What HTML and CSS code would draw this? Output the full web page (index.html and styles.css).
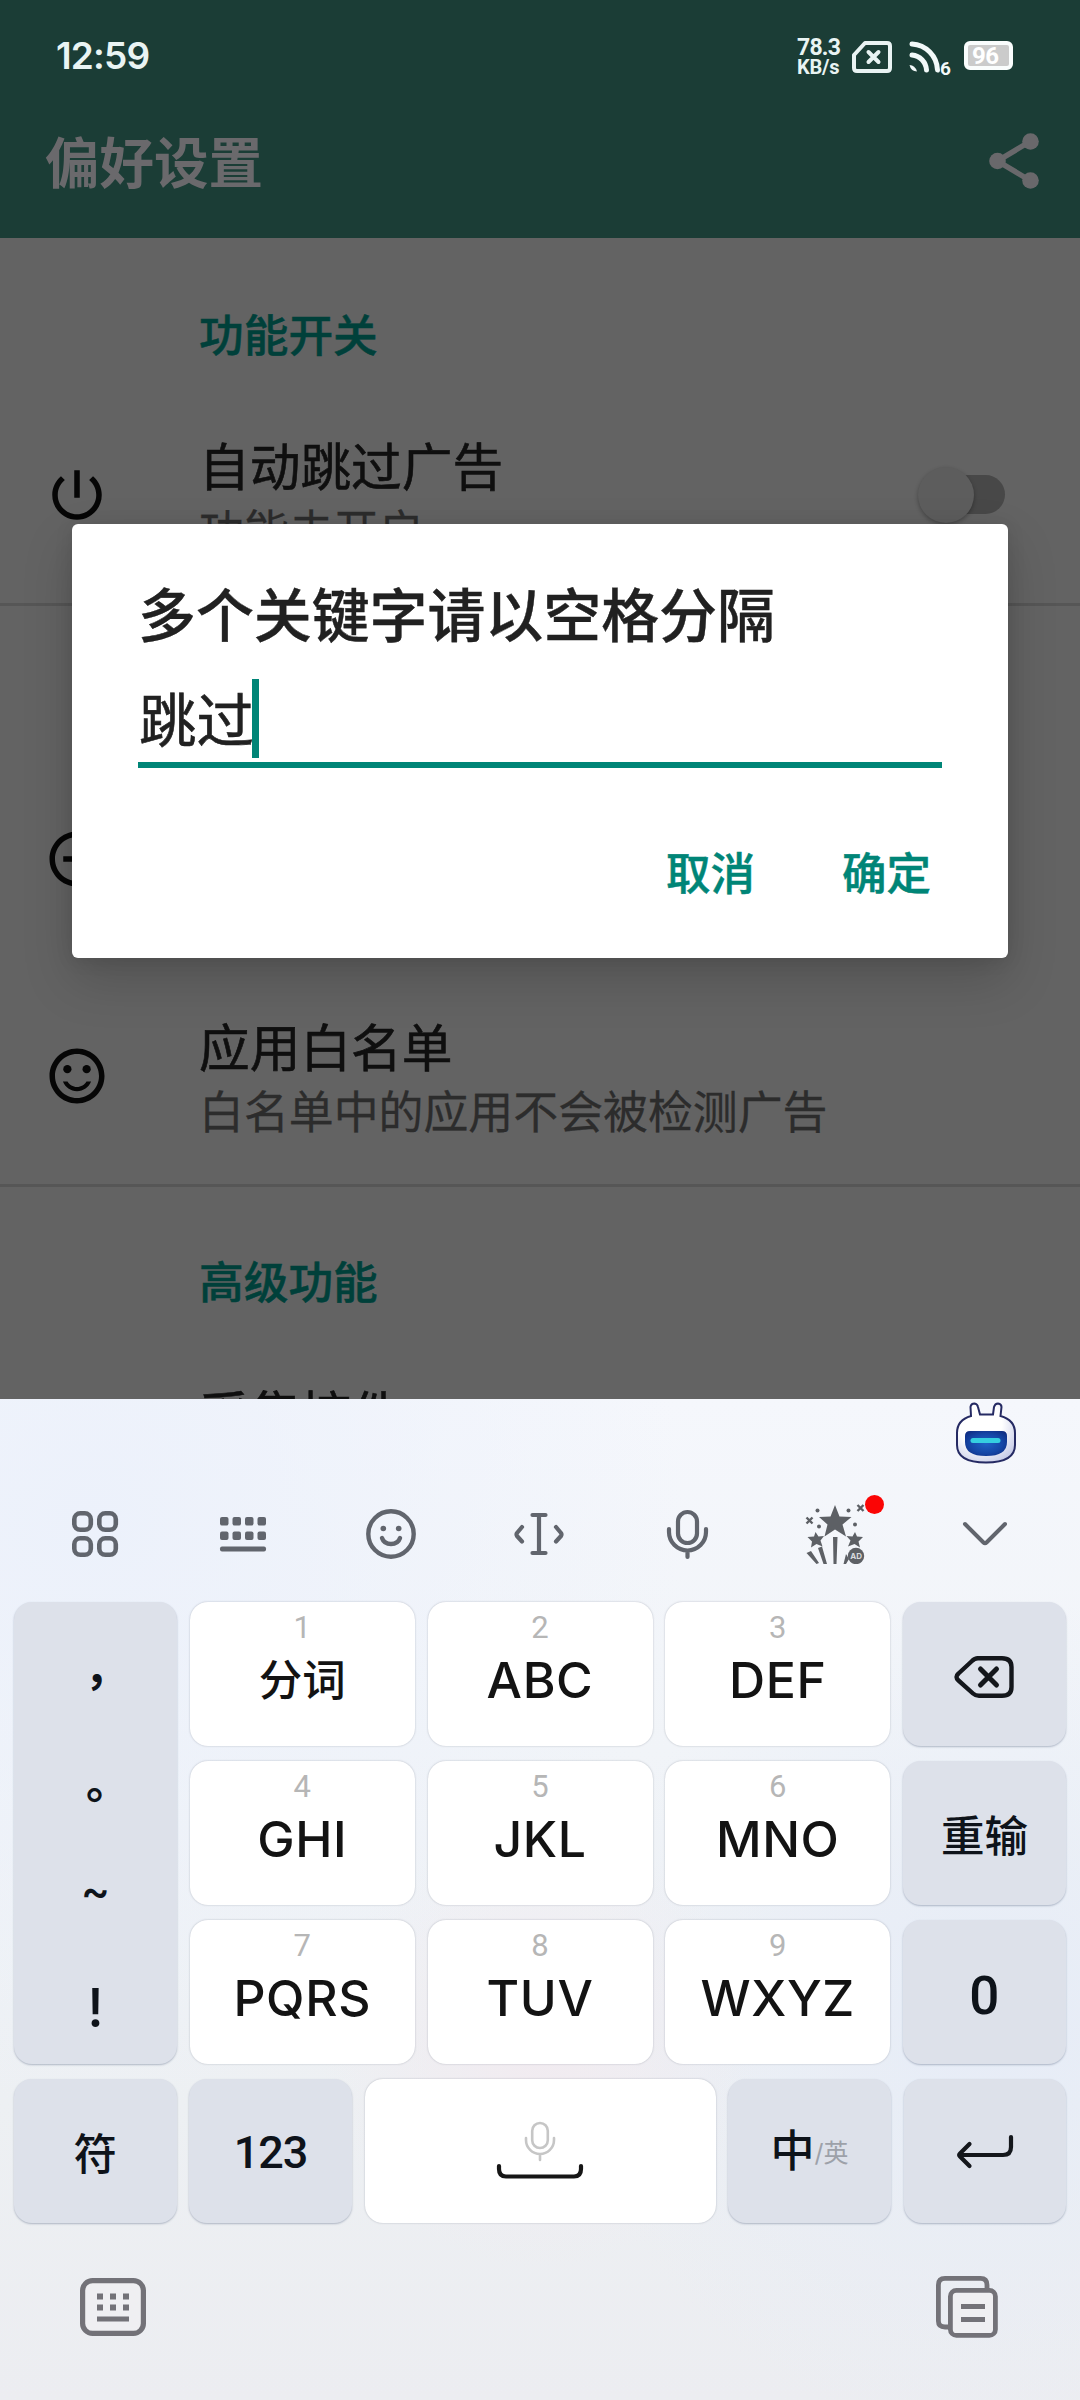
FILE: index.html
```html
<!DOCTYPE html>
<html lang="zh-CN">
<head>
<meta charset="utf-8">
<title>偏好设置</title>
<link rel="stylesheet" href="styles.css">
</head>
<body>
<div class="screen">
  <main class="app">
    <header class="header">
      <div class="status">
        <span class="clock">12:59</span>
        <div class="status-icons">
          <div class="speed"><span class="speed-num">78.3</span><span class="speed-unit">KB/s</span></div>
          <svg class="sim" width="40" height="32" viewBox="0 0 40 32" fill="none" stroke="#e9f3f3" stroke-width="4" stroke-linejoin="round" stroke-linecap="round"><path d="M13 2H35Q38 2 38 5V27Q38 30 35 30H5Q2 30 2 27V14Z"/><path d="M16.500 11l10 10M26.500 11l-10 10"/></svg>
          <svg class="wifi" width="42" height="36" viewBox="0 0 42 36" fill="none" stroke="#f2f9f9" stroke-width="5" stroke-linecap="round"><path d="M3 4A27 27 0 0 1 28.500 30M3 15A16 16 0 0 1 17.500 30"/><path d="M0.500 25Q6 25 8 31.500Q2 31.500 0.500 25Z" fill="#f2f9f9" stroke="none"/><text class="wifi-gen" x="31" y="34.500">6</text></svg>
          <span class="battery">96</span>
        </div>
      </div>
      <div class="toolbar">
        <h1 class="title">偏好设置</h1>
        <svg class="share" width="50" height="56" viewBox="0 0 50 56" fill="#69686b"><path d="M41 8.500L8.500 28L41 47.500" fill="none" stroke="#69686b" stroke-width="5.500"/><circle cx="41.500" cy="8.500" r="8.300"/><circle cx="8.500" cy="28" r="8.300"/><circle cx="41.500" cy="47.500" r="8.300"/></svg>
      </div>
    </header>
    <section class="group">
      <h2 class="group-title">功能开关</h2>
      <div class="row">
        <svg class="row-icon" viewBox="0 0 24 24"><path d="M13 3h-2v10h2V3zm4.830 2.170l-1.420 1.420C17.990 7.860 19 9.810 19 12c0 3.870-3.130 7-7 7s-7-3.130-7-7c0-2.190 1.010-4.140 2.580-5.420L6.170 5.170C4.230 6.820 3 9.260 3 12c0 4.970 4.030 9 9 9s9-4.030 9-9c0-2.740-1.230-5.180-3.170-6.830z"/></svg>
        <div class="row-text"><div class="row-title">自动跳过广告</div><div class="row-sub">功能未开启</div></div>
        <span class="switch"></span>
      </div>
    </section>
    <section class="group group-skip">
      <div class="row">
        <svg class="row-icon" viewBox="0 0 24 24"><path d="M7 11v2h10v-2H7zm5-9C6.480 2 2 6.480 2 12s4.480 10 10 10 10-4.480 10-10S17.520 2 12 2zm0 18c-4.410 0-8-3.590-8-8s3.590-8 8-8 8 3.590 8 8-3.590 8-8 8z"/></svg>
      </div>
      <div class="row">
        <svg class="row-icon" viewBox="0 0 24 24"><circle cx="15.500" cy="9.500" r="1.500"/><circle cx="8.500" cy="9.500" r="1.500"/><path d="M12 16c-1.480 0-2.750-.810-3.450-2H6.880c.800 2.050 2.790 3.500 5.120 3.500s4.320-1.450 5.120-3.500h-1.670c-.690 1.190-1.970 2-3.450 2zM12 2C6.470 2 2 6.480 2 12s4.470 10 10 10 10-4.480 10-10S17.520 2 12 2zm0 18c-4.420 0-8-3.580-8-8s3.580-8 8-8 8 3.580 8 8-3.580 8-8 8z"/></svg>
        <div class="row-text"><div class="row-title">应用白名单</div><div class="row-sub">白名单中的应用不会被检测广告</div></div>
      </div>
    </section>
    <section class="group group-advanced">
      <h2 class="group-title">高级功能</h2>
      <div class="row row-plain"><div class="row-text"><div class="row-title">采集控件</div></div></div>
    </section>
    <div class="dialog">
      <h2 class="dialog-title">多个关键字请以空格分隔</h2>
      <div class="field"><span class="field-text">跳过</span><span class="caret"></span></div>
      <div class="actions"><span>取消</span><span>确定</span></div>
    </div>
  </main>

  <section class="keyboard">
    <div class="mascot-bar">
      <svg width="60" height="62" viewBox="0 0 60 62">
        <defs>
          <radialGradient id="face" cx=".4" cy=".35" r=".75"><stop offset=".5" stop-color="#fff"/><stop offset="1" stop-color="#c3c8e6"/></radialGradient>
          <radialGradient id="visor" cx=".5" cy=".5" r=".65"><stop offset="0" stop-color="#1f62c4"/><stop offset=".6" stop-color="#1546a6"/><stop offset="1" stop-color="#0f2b80"/></radialGradient>
        </defs>
        <path d="M15 14L14.500 5Q15 1.500 18.500 1.500Q21.500 2 22 5L24 12.500H37L38 5Q39 1.500 42 1.500Q45.500 2 45.500 5L44.500 14Q59 18 59 31V43Q59 60.500 30 60.500Q1 60.500 1 43V31Q1 18 15 14Z" fill="url(#face)" stroke="#252a63" stroke-width="2"/>
        <path d="M14 29H46Q51 29 51 34V40Q51 54 30 54Q9 54 9 40V34Q9 29 14 29Z" fill="url(#visor)"/>
        <path d="M17 38.500H42" stroke="#35cfe0" stroke-width="5" stroke-linecap="round"/>
      </svg>
    </div>
    <div class="tools">
      <svg width="60" height="60" viewBox="0 0 60 60" fill="none" stroke="#61656d" stroke-width="4.600"><rect x="9.300" y="9.300" width="16.500" height="16.500" rx="6"/><rect x="34.300" y="9.300" width="16.500" height="16.500" rx="6"/><rect x="9.300" y="34.300" width="16.500" height="16.500" rx="6"/><rect x="34.300" y="34.300" width="16.500" height="16.500" rx="6"/></svg>
      <svg width="60" height="60" viewBox="0 0 60 60" fill="#61656d"><rect x="7" y="13" width="8.500" height="8.500" rx="2"/><rect x="19.500" y="13" width="8.500" height="8.500" rx="2"/><rect x="32" y="13" width="8.500" height="8.500" rx="2"/><rect x="44.500" y="13" width="8.500" height="8.500" rx="2"/><rect x="7" y="27.500" width="8.500" height="8.500" rx="2"/><rect x="19.500" y="27.500" width="8.500" height="8.500" rx="2"/><rect x="32" y="27.500" width="8.500" height="8.500" rx="2"/><rect x="44.500" y="27.500" width="8.500" height="8.500" rx="2"/><rect x="7" y="42.500" width="46" height="5" rx="2"/></svg>
      <svg width="60" height="60" viewBox="0 0 60 60" fill="none" stroke="#61656d" stroke-width="4.400" stroke-linecap="round"><circle cx="29" cy="30" r="22.700"/><circle cx="21.300" cy="24.500" r="2.800" fill="#61656d" stroke="none"/><circle cx="36.700" cy="24.500" r="2.800" fill="#61656d" stroke="none"/><path d="M20 34Q22 40 29 40T38 34"/></svg>
      <svg width="60" height="60" viewBox="0 0 60 60" fill="none" stroke="#61656d" stroke-width="4.200" stroke-linecap="round" stroke-linejoin="round"><path d="M22.500 11H35.500M29 11V49M22.500 49H35.500M12 23L7 29Q6 30.500 7 32L12 37.500M46 23L51 29Q52 30.500 51 32L46 37.500"/></svg>
      <svg width="60" height="60" viewBox="0 0 60 60" fill="none" stroke="#61656d" stroke-width="4.200" stroke-linecap="round"><rect x="20" y="8" width="19" height="31" rx="9.500"/><path d="M11 25V28A18.500 18.500 0 0 0 48 28V25M29.500 47V53"/></svg>
      <span class="tool-badge">
        <svg width="60" height="60" viewBox="0 0 60 60" fill="#5d6065"><path d="M30 1L34.500 12.500L46.500 13L37.500 20.500L41 32.500L30 25.500L19.500 32.500L22.500 20.500L14 13L25.500 12.500Z"/><path d="M10.500 28L13.500 32.500L19 32L15.500 36.500L17.500 42.500L11.500 40L6 43.500L7 37.500L2.500 33L9 32.500ZM50 28L52 32.500L58 33L53.500 37.500L55 43.500L49.500 40L43 42.500L45.500 36.500L41.500 32L47.500 32.500Z"/><path d="M28 33H32.500L31.500 60H28.500ZM13 44L17 42.500L22 60H18.500ZM1.500 49L6 47L14 59L11.500 60ZM41 50L44 55L41 60H38.500Z"/><path d="M1.500 13.500l6 6M7.500 13.500l-6 6M52.500 1l6 6M58.500 1l-6 6" stroke="#5d6065" stroke-width="2.400"/><circle cx="12.500" cy="6.500" r="2"/><circle cx="43.500" cy="6.500" r="2"/><circle cx="14" cy="22.500" r="2"/><circle cx="50" cy="20.500" r="2"/><circle cx="51" cy="52" r="8.200"/><text class="ad" x="45.300" y="55.200">AD</text></svg>
        <i class="dot"></i>
      </span>
      <svg width="60" height="60" viewBox="0 0 60 60" fill="none" stroke="#61656d" stroke-width="4" stroke-linecap="round" stroke-linejoin="round"><path d="M10 20L28.500 38.500Q30 40 31.500 38.500L50 20"/></svg>
    </div>
    <div class="keys">
      <div class="key dim punct"><span class="p-comma">，</span><span class="p-stop">。</span><span class="p-tilde">~</span><span class="p-bang">!</span></div>
      <div class="key"><small>1</small><b class="han">分词</b></div>
      <div class="key"><small>2</small><b>ABC</b></div>
      <div class="key"><small>3</small><b>DEF</b></div>
      <div class="key dim"><svg class="backspace" width="60" height="44" viewBox="0 0 60 44" fill="none" stroke="#14171c" stroke-width="4.400" stroke-linecap="round" stroke-linejoin="round"><path d="M23 3.200H48Q57.500 3.200 57.500 12V32Q57.500 40.800 48 40.800H25Q21.500 40.800 19 38.500L4.500 25.500Q0.500 22 4.500 18.500L18 6Q20.500 3.200 24 3.200Z"/><path d="M26.500 14l16 16M42.500 14l-16 16" stroke-width="5"/></svg></div>
      <div class="key"><small>4</small><b>GHI</b></div>
      <div class="key"><small>5</small><b>JKL</b></div>
      <div class="key"><small>6</small><b>MNO</b></div>
      <div class="key dim"><b class="han">重输</b></div>
      <div class="key"><small>7</small><b>PQRS</b></div>
      <div class="key"><small>8</small><b>TUV</b></div>
      <div class="key"><small>9</small><b>WXYZ</b></div>
      <div class="key dim"><b class="zero">0</b></div>
    </div>
    <div class="keys-bottom">
      <div class="key dim"><b class="han">符</b></div>
      <div class="key dim"><b class="digits">123</b></div>
      <div class="key space">
        <svg width="88" height="60" viewBox="0 0 88 60" fill="none" stroke-linecap="round"><g stroke="#c6c6c6" stroke-width="2.600"><rect x="36.200" y="2" width="15.600" height="25" rx="7.800"/><path d="M30 17V19A14 14 0 0 0 58 19V17M44 34V39"/></g><path d="M3 45V48Q3 55.500 10 55.500H78Q85 55.500 85 48V45" stroke="#161616" stroke-width="4.200"/></svg>
      </div>
      <div class="key dim lang"><b class="zh">中</b><span>/英</span></div>
      <div class="key dim"><svg width="60" height="36" viewBox="0 0 60 36" fill="none" stroke="#14171c" stroke-width="4.200" stroke-linecap="round" stroke-linejoin="round"><path d="M56 4V14Q56 22 48 22H5M14.500 11L5 20.500Q3.500 22 5 23.500L14.500 33"/></svg></div>
    </div>
    <div class="nav">
      <svg width="66" height="58" viewBox="0 0 66 58" fill="#737278"><rect x="2.600" y="2.600" width="60.800" height="52.800" rx="10" fill="#efeff2" stroke="#737278" stroke-width="5.200"/><path d="M17 15.500h6v6h-6zM30 15.500h6v6h-6zM43 15.500h6v6h-6zM17 26.500h6v6h-6zM30 26.500h6v6h-6zM43 26.500h6v6h-6zM17 38.500h32v5h-32z"/></svg>
      <svg width="62" height="62" viewBox="0 0 62 62" fill="none" stroke="#737278" stroke-width="4.800"><path d="M51 13V9Q51 2.400 44.500 2.400H9Q2.400 2.400 2.400 9V45Q2.400 51 9 51H13"/><rect x="14.400" y="14.400" width="45" height="45" rx="6" fill="#efeff2"/><path d="M25 30.500H49M25 43.500H49"/></svg>
    </div>
  </section>
</div>
</body>
</html>
```
FILE: styles.css
```css
* { box-sizing: border-box; margin: 0; padding: 0; }

body {
  width: 1080px;
  height: 2400px;
  overflow: hidden;
  background: #636363;
  font-family: Inter, "Noto Sans CJK SC", sans-serif;
}

.screen { display: flex; flex-direction: column; height: 2400px; }

/* App behind the dialog */
.app {
  position: relative;
  flex: none;
  height: 1399px;
  overflow: hidden;
  background: #636363;
}

.header { height: 238px; background: #1b3d36; }

.status {
  display: flex;
  justify-content: space-between;
  height: 96px;
  padding: 38px 67px 0 56px;
  color: #e9f4f3;
}

.clock {
  font: 600 37px/36px Inter, sans-serif;
  letter-spacing: -0.8px;
}

.status-icons { display: flex; }

.speed {
  display: flex;
  flex-direction: column;
  width: 55px;
  font-family: Roboto, sans-serif;
  font-weight: 700;
  white-space: nowrap;
}

.speed-num { font-size: 23px; line-height: 20px; letter-spacing: -0.8px; }
.speed-unit { font-size: 20px; line-height: 18px; letter-spacing: -0.2px; }
.sim { margin: 3px 17px 0 0; }
.wifi { margin: 2px 13px 0 0; overflow: visible; }
.wifi-gen { fill: #f2f9f9; stroke: none; font: 700 19px Roboto, sans-serif; }

.battery {
  width: 49px;
  height: 29px;
  margin-top: 3px;
  padding-left: 4px;
  border: 4px solid #fafdfd;
  border-radius: 6px;
  background: #cbcbcb;
  color: #fff;
  font: 700 24px/22px Roboto, sans-serif;
  letter-spacing: -0.5px;
}

.toolbar {
  display: flex;
  justify-content: space-between;
  align-items: center;
  height: 130px;
  padding: 0 41px 0 45px;
}

.title { padding-top: 4px; color: #6a696c; font-size: 54.5px; font-weight: 700; line-height: 80px; }

.group { border-bottom: 3px solid #565656; }

.group-title {
  height: 148px;
  padding: 65px 0 0 199px;
  color: #00403a;
  font-size: 44.7px;
  font-weight: 500;
  line-height: 66px;
  -webkit-text-stroke: 0.5px currentColor;
}

.group-advanced .group-title { height: 147px; padding-top: 63px; }

.row {
  display: flex;
  align-items: center;
  height: 217px;
}

.row-plain { padding-left: 199px; }
.row-icon { flex: none; width: 66px; height: 66px; margin: 0 89px 0 44px; fill: #060606; }
.row-text { flex: 1; min-height: 138px; padding-top: 9px; }
.row-title { color: #0f0f0f; font-size: 50.7px; line-height: 66px; -webkit-text-stroke: 0.6px currentColor; }
.row-sub { color: #2c2c2c; font-size: 44.9px; line-height: 63px; -webkit-text-stroke: 0.3px currentColor; }

.switch {
  width: 76px;
  height: 39px;
  margin-right: 75px;
  border-radius: 20px;
  background: #484848;
}

.switch::before {
  content: "";
  display: block;
  width: 56px;
  height: 56px;
  margin: -8px 0 0 -11px;
  border-radius: 50%;
  background: #5d5d5d;
  box-shadow: 0 2px 4px rgba(0, 0, 0, .3);
}

.group-skip { padding-top: 144px; }

/* Keyword dialog */
.dialog {
  position: absolute;
  left: 72px;
  top: 524px;
  width: 936px;
  height: 434px;
  padding: 52px 66px 0;
  border-radius: 6px;
  background: #fff;
  box-shadow: 0 22px 50px rgba(0, 0, 0, .17), 0 2px 18px rgba(0, 0, 0, .1);
}

.dialog-title {
  height: 76px;
  color: #212121;
  font-size: 57.9px;
  font-weight: 500;
  line-height: 80px;
  white-space: nowrap;
  -webkit-text-stroke: 0.4px currentColor;
}

.field {
  display: flex;
  height: 116px;
  padding: 27px 0 0 1px;
  border-bottom: 6px solid #008577;
}

.field-text {
  width: 113px;
  color: #212121;
  font-size: 57.5px;
  line-height: 84px;
  white-space: nowrap;
  -webkit-text-stroke: 0.6px currentColor;
}

.caret { width: 7px; height: 79px; background: #008577; }

.actions {
  display: flex;
  justify-content: flex-end;
  gap: 87px;
  padding: 73px 11px 0 0;
  color: #008577;
  font-size: 44.5px;
  font-weight: 500;
  line-height: 66px;
  -webkit-text-stroke: 0.5px currentColor;
}

/* Keyboard */
.keyboard {
  flex: 1;
  background:
    radial-gradient(circle at 50% 65%, #f1ebf0 0, rgba(241, 235, 240, 0) 26%),
    radial-gradient(circle at 92% 62%, #e6ecf7 0, rgba(230, 236, 247, 0) 36%),
    radial-gradient(circle at 8% 12%, #ecf1fb 0, rgba(236, 241, 251, 0) 45%),
    linear-gradient(#f5f7fc 0, #f1f4f8 35%, #edf0f3 70%, #ecedf1);
}

.mascot-bar {
  display: flex;
  justify-content: flex-end;
  height: 105px;
  padding: 3px 64px 0;
}

.tools {
  display: flex;
  justify-content: space-between;
  height: 98px;
  padding: 0 65px;
}

.tools svg { display: block; }
.tool-badge { position: relative; margin: 0 2px 0 -2px; }
.dot { position: absolute; left: 60px; top: -9px; width: 19px; height: 19px; border-radius: 50%; background: #fb0505; }
.ad { fill: #d8dade; font: 700 8px Inter, sans-serif; }

.keys {
  display: grid;
  grid-template-columns: 163px 225px 225px 225px 163px;
  grid-template-rows: repeat(3, 144px);
  gap: 15px 12.75px;
  padding: 0 14px;
}

.keys-bottom { display: flex; gap: 12.75px; padding: 15px 14px 0; }
.keys-bottom .key { width: 162.5px; height: 144px; }
.keys-bottom .space { width: 352px; flex: 1; }

.key {
  display: flex;
  flex-direction: column;
  align-items: center;
  justify-content: center;
  border-radius: 18px;
  background: #fff;
  box-shadow: 0 0 2px rgba(60, 70, 90, .35);
  color: #131313;
}

.key.dim { background: #dde1ea; color: #0e131a; box-shadow: 0 1px 2px rgba(80, 95, 125, .4); }
.key small { color: #b6b6b6; font: 400 31px/34px Roboto, sans-serif; margin-top: -23px; }
.key b { font-size: 50px; font-weight: 500; line-height: 70px; letter-spacing: 0.6px; }
.key .han { font-size: 43.5px; letter-spacing: 0; }
.key.dim .han { padding-top: 5px; }
.key .zero { padding-top: 8px; font-family: Roboto, sans-serif; font-size: 53px; }
.key .digits { padding-top: 3px; font-family: Roboto, sans-serif; font-size: 45px; letter-spacing: -1px; }
.backspace { margin: 6px 2px 0 0; }

.punct { grid-row: span 3; justify-content: flex-start; font-size: 44px; font-weight: 500; }
.punct span { height: 113px; line-height: 110px; }
.punct .p-comma { padding: 12px 0 0 22px; font-weight: 700; }
.punct .p-stop { padding: 13px 0 0 25px; font-weight: 700; }
.punct .p-tilde { padding-top: 7px; }
.punct .p-bang { padding-top: 12px; font-size: 54px; }

.lang { flex-direction: row; }
.key .zh { font-size: 44px; letter-spacing: 0; }
.lang span { color: #9da1a9; font-size: 25px; }

.nav {
  display: flex;
  justify-content: space-between;
  align-items: center;
  height: 168px;
  padding: 0 82px 0 80px;
}
```
